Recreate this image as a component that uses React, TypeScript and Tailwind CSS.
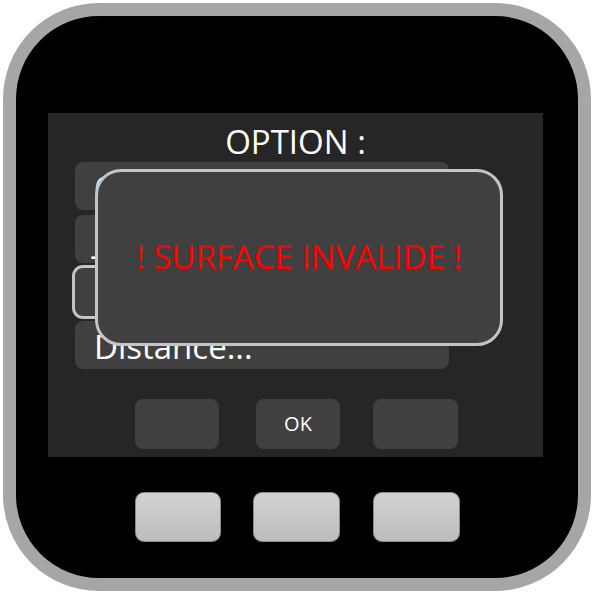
import React from 'react';

const items = ['Couleur...', 'Jour...', 'Unités...', 'Distance...'];

export default function App() {
  return (
    <div className="w-[594px] h-[594px] bg-white p-[3px]" style={{ fontFamily: '"Open Sans", "Noto Sans", sans-serif' }}>
      <div className="w-[588px] h-[588px] rounded-[96px] border-[13px] border-[#a6a6a6] bg-black flex flex-col pt-[97px]">
        {/* écran */}
        <div className="relative ml-[32px] w-[495px] h-[344px] bg-[#262626] flex flex-col">
          <div className="h-[49px] flex items-end justify-center text-white text-[33px] leading-none pb-[4px]">
            OPTION :
          </div>
          <div className="flex flex-col gap-[5px] ml-[27px] w-[374px]">
            {items.map((label, i) => (
              <div
                key={label}
                className={
                  'h-[48px] rounded-[8px] bg-[#404040] flex items-center pl-[19px] text-white text-[33px] leading-none ' +
                  (i === 2 ? 'outline-[3px] outline-solid outline-[#c4c4c4]' : '')
                }
              >
                <span className="pt-[2px]">{label}</span>
              </div>
            ))}
          </div>
          <div className="flex mt-[30px] pl-[87px]">
            <div className="w-[84px] h-[50px] rounded-[8px] bg-[#404040]" />
            <div className="ml-[37px] w-[84px] h-[50px] rounded-[8px] bg-[#404040] flex items-center justify-center text-white text-[20px]">
              OK
            </div>
            <div className="ml-[33px] w-[85px] h-[50px] rounded-[8px] bg-[#404040]" />
          </div>

          {/* message d'erreur */}
          <div className="absolute left-[47px] top-[56px] w-[408px] h-[177px] rounded-[26px] border-[3px] border-[#c4c4c4] bg-[#404040] flex items-center justify-center">
            <span className="text-[#ff0000] text-[33px] leading-none pb-[3px]">! SURFACE INVALIDE !</span>
          </div>
        </div>

        {/* boutons physiques */}
        <div className="flex ml-[119px] mt-[35px]">
          <div className="w-[86px] h-[50px] rounded-[9px] border border-[#8a8a8a] bg-gradient-to-b from-[#d2d2d2] to-[#bdbdbd]" />
          <div className="ml-[32px] w-[87px] h-[50px] rounded-[9px] border border-[#8a8a8a] bg-gradient-to-b from-[#d2d2d2] to-[#bdbdbd]" />
          <div className="ml-[33px] w-[87px] h-[50px] rounded-[9px] border border-[#8a8a8a] bg-gradient-to-b from-[#d2d2d2] to-[#bdbdbd]" />
        </div>
      </div>
    </div>
  );
}
